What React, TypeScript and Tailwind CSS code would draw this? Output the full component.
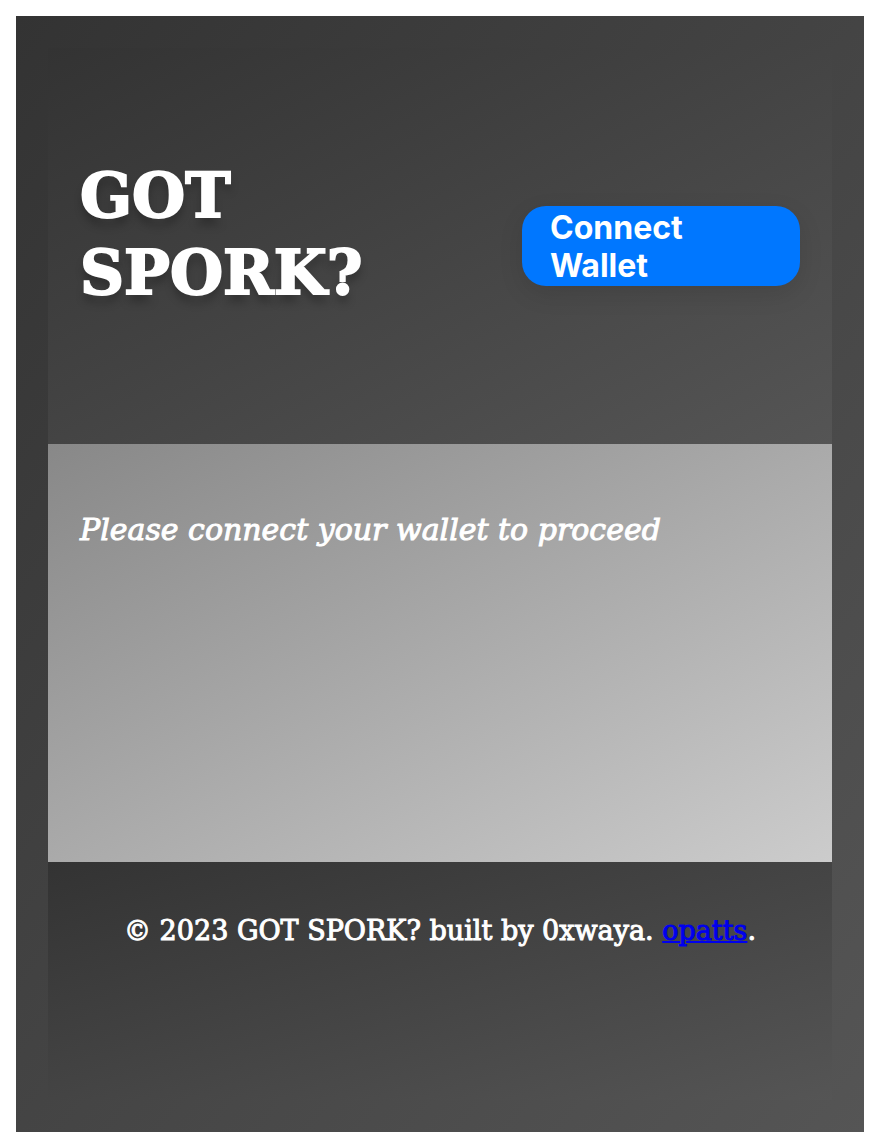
export default function App() {
  return (
    <div className="min-h-screen bg-white p-4 font-['DejaVu_Serif',serif] text-white">
      <div className="flex min-h-[calc(100vh-32px)] flex-col bg-linear-to-br/srgb from-[#333333] to-[#555555] p-8">
        <header className="flex min-h-[396px] items-center justify-between bg-linear-to-br/srgb from-[#333333] to-[#555555] px-8">
          <h1 className="w-[300px] pb-6 text-[61px] leading-[77px] font-bold [-webkit-text-stroke:2px_white] [text-shadow:0_8px_8px_rgba(0,0,0,0.25)]">
            GOT SPORK?
          </h1>
          <button
            type="button"
            className="h-20 w-[278px] rounded-3xl bg-[#0077ff] px-7 pt-[2px] text-left font-['Inter',sans-serif] text-[32px] leading-[38px] font-bold shadow-[0_8px_24px_rgba(0,0,0,0.1)]"
          >
            <span className="block w-40">Connect Wallet</span>
          </button>
        </header>
        <main className="min-h-[418px] bg-linear-to-br/srgb from-[#888888] to-[#cccccc] px-8 pt-16">
          <p className="text-[30px] leading-[44px] italic [-webkit-text-stroke:1px_currentColor]">
            Please connect your wallet to proceed
          </p>
        </main>
        <footer className="flex-1 bg-linear-to-br/srgb from-[#333333] to-[#555555] px-8 pt-12 text-center">
          <p className="text-[27px] leading-[42px] [-webkit-text-stroke:1px_currentColor]">
            © 2023 GOT SPORK? built by 0xwaya.{' '}
            <a href="#opatts" className="text-[#0000ee] underline decoration-2 [-webkit-text-stroke:1px_#0000ee]">
              opatts
            </a>
            .
          </p>
        </footer>
      </div>
    </div>
  );
}
